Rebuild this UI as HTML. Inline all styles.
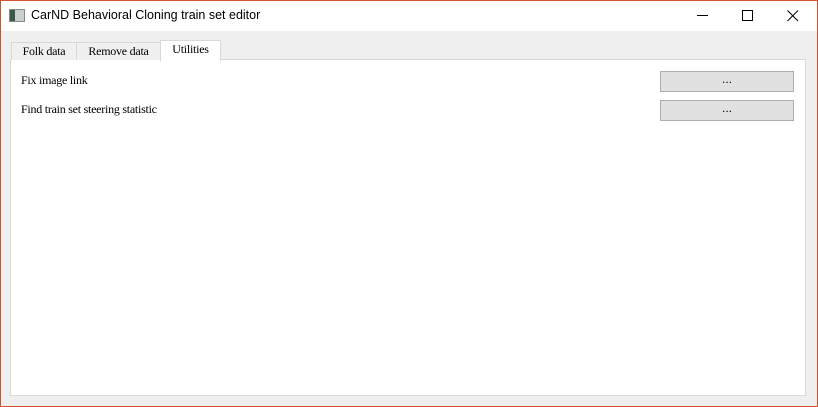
<!DOCTYPE html>
<html><head><style>
body{margin:0;width:818px;height:407px;overflow:hidden;background:#fff}
.win{position:absolute;left:0;top:0;width:816px;height:405px;border:1px solid #d4532f;background:#efefef}
.title{position:absolute;left:0;top:0;width:816px;height:30px;background:#fff}
.tt{position:absolute;left:30px;top:7px;font:12.5px "Liberation Sans",sans-serif;color:#000}
.icon{position:absolute;left:8px;top:8px;width:14px;height:11px;border:1px solid #888;background:linear-gradient(90deg,#3a5a50 0 5px,#c8d0d0 5px)}
.serif{font:12px "Liberation Serif",serif;color:#000;letter-spacing:-0.25px}
.tab{position:absolute;top:41px;height:17px;border:1px solid #d8d8d8;border-bottom:none;background:#f0f0f0;text-align:center;line-height:16px}
.panel{position:absolute;left:9px;top:58px;width:794px;height:335px;border:1px solid #d8d8d8;background:#fff}
.btn{position:absolute;left:649px;width:132px;height:19px;border:1px solid #adadad;background:#e1e1e1;text-align:center;line-height:16px;font:12px "Liberation Sans",sans-serif}
.lbl{position:absolute;left:10px}
</style></head><body>
<div class="win">
<div class="title"><div class="icon"></div><div class="tt">CarND Behavioral Cloning train set editor</div>
<div style="position:absolute;left:696px;top:14px;width:11px;height:1px;background:#000"></div>
<div style="position:absolute;left:741px;top:9px;width:9px;height:9px;border:1px solid #000"></div>
<svg style="position:absolute;left:786px;top:9px" width="12" height="12"><path d="M0.5 0.5L11 11M11 0.5L0.5 11" stroke="#000" stroke-width="1"/></svg>
</div>
<div class="panel">
<div class="lbl serif" style="top:13px">Fix image link</div>
<div class="lbl serif" style="top:42px">Find train set steering statistic</div>
<div class="btn" style="top:11px">...</div>
<div class="btn" style="top:40px">...</div>
</div>
<div class="tab serif" style="left:10px;width:64px">Folk data</div>
<div class="tab serif" style="left:75px;width:83px">Remove data</div>
<div class="tab serif" style="left:159px;top:39px;height:20px;width:59px;background:#fff">Utilities</div>
</div>
</body></html>
